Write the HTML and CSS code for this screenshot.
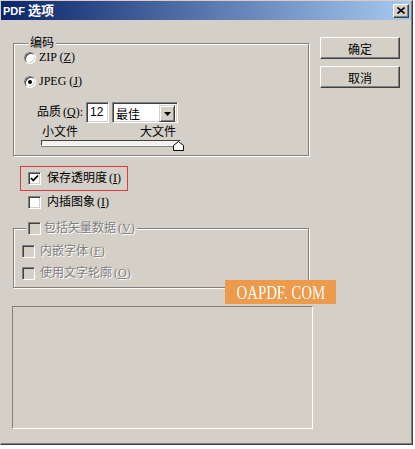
FILE: index.html
```html
<!DOCTYPE html>
<html lang="zh-CN">
<head>
    <meta charset="UTF-8">
    <meta name="viewport" content="width=device-width, initial-scale=1.0">
    <title>PDF 选项</title>
    <link rel="stylesheet" href="styles.css">
</head>
<body>
    <div class="dialog">
        <div class="titlebar">
            <span class="title"><span class="title-latin">PDF</span> 选项</span>
            <button class="close-btn">
                <svg width="8" height="7" viewBox="0 0 8 7"><path d="M0.5 0.5 L7.5 6.5 M7.5 0.5 L0.5 6.5" stroke="#000" stroke-width="1.6"/></svg>
            </button>
        </div>

        <div class="dialog-body">
            <div class="left-col">
                <div class="group group-encoding">
                    <span class="group-label">编码</span>
                    <div class="radio-row"><span class="radio"></span><span>ZIP (<u>Z</u>)</span></div>
                    <div class="radio-row radio-row-jpeg"><span class="radio checked"></span><span>JPEG (<u>J</u>)</span></div>
                    <div class="quality-row">
                        <span>品质<span class="key">(<u>Q</u>):</span></span>
                        <span class="text-field">12</span>
                        <span class="select-box">
                            <span class="select-value">最佳</span>
                            <span class="select-arrow">
                                <svg width="7" height="4" viewBox="0 0 7 4"><path d="M0 0 H7 L3.5 4 Z" fill="#000"/></svg>
                            </span>
                        </span>
                    </div>
                    <div class="size-labels"><span>小文件</span><span>大文件</span></div>
                    <div class="slider">
                        <svg class="slider-thumb" width="11" height="10" viewBox="0 0 11 10">
                            <path d="M0.5 9.5 V4.5 L5.5 0.5 L10.5 4.5 V9.5 Z" fill="#fff" stroke="#000"/>
                        </svg>
                    </div>
                </div>

                <div class="check-row highlight">
                    <span class="checkbox">
                        <svg width="11" height="11" viewBox="0 0 11 11"><path d="M2 5 L4.3 7.5 L9 2.5" fill="none" stroke="#000" stroke-width="1.8"/></svg>
                    </span>
                    <span>保存透明度<span class="key">(<u>I</u>)</span></span>
                </div>
                <div class="check-row">
                    <span class="checkbox"></span>
                    <span>内插图象<span class="key">(<u>I</u>)</span></span>
                </div>

                <div class="group group-vector">
                    <span class="group-label">
                        <span class="checkbox disabled"></span>
                        <span class="disabled-text">包括矢量数据<span class="key">(<u>V</u>)</span></span>
                    </span>
                    <div class="sub-row"><span class="checkbox disabled"></span><span class="disabled-text">内嵌字体<span class="key">(<u>F</u>)</span></span></div>
                    <div class="sub-row"><span class="checkbox disabled"></span><span class="disabled-text">使用文字轮廓<span class="key">(<u>O</u>)</span></span></div>
                </div>

                <div class="preview-panel"></div>
            </div>

            <div class="right-col">
                <button class="btn">确定</button>
                <button class="btn">取消</button>
            </div>
        </div>

        <div class="watermark"><span>OAPDF. COM</span></div>
    </div>
</body>
</html>
```

FILE: styles.css
```css
:root {
    --face: #d4d0c8;
    --shadow: #808080;
    --dark: #404040;
    --light: #ffffff;
}

* {
    margin: 0;
    padding: 0;
    box-sizing: border-box;
}

body {
    background: #ffffff;
    font-family: 'Liberation Serif', 'Noto Sans CJK SC', sans-serif;
    font-size: 12px;
    line-height: 13px;
    color: #000;
}

u {
    text-decoration: underline;
    text-underline-offset: 1px;
}

.key {
    margin-left: 2px;
}

.dialog {
    position: relative;
    width: 413px;
    height: 445px;
    background: var(--face);
    border: 1px solid;
    border-color: var(--face) var(--dark) var(--dark) var(--face);
    box-shadow: inset -1px -1px 0 var(--shadow);
}

.titlebar {
    height: 19px;
    margin-right: 1px;
    display: flex;
    align-items: center;
    justify-content: space-between;
    background: linear-gradient(90deg, #0a246a, #a6caf0);
}

.title {
    padding-left: 2px;
    color: #fff;
    font-family: 'Noto Sans CJK SC', sans-serif;
    font-weight: bold;
    font-size: 13px;
}

.title-latin {
    font-family: 'Liberation Sans', sans-serif;
    font-size: 11px;
}

.close-btn {
    width: 16px;
    height: 14px;
    margin-right: 2px;
    display: flex;
    align-items: center;
    justify-content: center;
    background: var(--face);
    border: 1px solid;
    border-color: var(--light) var(--dark) var(--dark) var(--light);
    box-shadow: inset -1px -1px 0 var(--shadow);
}

.dialog-body {
    display: flex;
    gap: 11px;
    padding-left: 12px;
}

.left-col {
    width: 296px;
    padding-top: 23px;
    display: flex;
    flex-direction: column;
}

.right-col {
    padding-top: 17px;
    display: flex;
    flex-direction: column;
    gap: 7px;
}

.btn {
    width: 80px;
    height: 22px;
    background: var(--face);
    border: 1px solid;
    border-color: var(--light) var(--dark) var(--dark) var(--light);
    box-shadow: inset -1px -1px 0 var(--shadow);
    font-family: 'Noto Sans CJK SC', sans-serif;
    font-size: 12px;
    color: #000;
}

/* group boxes */
.group {
    position: relative;
    border: 1px solid var(--shadow);
    box-shadow: inset 1px 1px 0 var(--light), 1px 1px 0 var(--light);
}

.group-label {
    position: absolute;
    top: -7px;
    left: 14px;
    padding: 0 2px;
    background: var(--face);
    display: flex;
    align-items: center;
    gap: 5px;
    height: 13px;
}

.group-encoding {
    height: 113px;
    padding-top: 7px;
}

.radio-row {
    display: flex;
    align-items: center;
    gap: 3px;
    height: 13px;
    padding-left: 10px;
}

.radio-row-jpeg {
    margin-top: 11px;
}

.radio {
    position: relative;
    width: 12px;
    height: 12px;
    border-radius: 50%;
    background: #fff;
    border: 1px solid;
    border-color: var(--shadow) var(--light) var(--light) var(--shadow);
    box-shadow: inset 1px 1px 0 var(--dark), inset -1px -1px 0 var(--face);
}

.radio.checked::after {
    content: '';
    position: absolute;
    left: 3px;
    top: 3px;
    width: 4px;
    height: 4px;
    border-radius: 50%;
    background: #000;
}

.quality-row {
    margin-top: 14px;
    padding-left: 23px;
    height: 21px;
    display: flex;
    align-items: center;
}

.text-field {
    width: 23px;
    height: 21px;
    margin-left: 3px;
    padding-left: 3px;
    background: #fff;
    border: 1px solid;
    border-color: var(--shadow) var(--light) var(--light) var(--shadow);
    box-shadow: inset 1px 1px 0 var(--dark), inset -1px -1px 0 var(--face);
    font-family: 'Liberation Sans', sans-serif;
    line-height: 19px;
}

.select-box {
    width: 66px;
    height: 21px;
    margin-left: 3px;
    padding: 2px;
    display: flex;
    justify-content: space-between;
    background: #fff;
    border: 1px solid;
    border-color: var(--shadow) var(--light) var(--light) var(--shadow);
    box-shadow: inset 1px 1px 0 var(--dark), inset -1px -1px 0 var(--face);
}

.select-value {
    padding-left: 1px;
    font-family: 'Noto Sans CJK SC', sans-serif;
    line-height: 17px;
}

.select-arrow {
    width: 16px;
    height: 17px;
    display: flex;
    align-items: center;
    justify-content: center;
    background: var(--face);
    border: 1px solid;
    border-color: var(--face) var(--dark) var(--dark) var(--face);
    box-shadow: inset 1px 1px 0 var(--light), inset -1px -1px 0 var(--shadow);
}

.size-labels {
    margin-top: 3px;
    margin-left: 28px;
    width: 134px;
    display: flex;
    justify-content: space-between;
    line-height: 12px;
}

.slider {
    position: relative;
    margin-top: 2px;
    margin-left: 27px;
    width: 140px;
    height: 6px;
    background: #f2f1ee;
    border: 1px solid;
    border-color: var(--dark) var(--light) var(--light) var(--dark);
    box-shadow: 0 1px 0 var(--shadow);
}

.slider-thumb {
    position: absolute;
    right: -4px;
    top: 0;
}

/* checkboxes */
.checkbox {
    width: 13px;
    height: 13px;
    flex: none;
    display: flex;
    align-items: center;
    justify-content: center;
    background: #fff;
    border: 1px solid;
    border-color: var(--shadow) var(--light) var(--light) var(--shadow);
    box-shadow: inset 1px 1px 0 var(--dark), inset -1px -1px 0 var(--face);
}

.checkbox.disabled {
    background: var(--face);
}

.check-row {
    display: flex;
    align-items: center;
    gap: 6px;
    height: 13px;
    margin-top: 5px;
    margin-left: 15px;
}

.check-row.highlight {
    width: 108px;
    height: 25px;
    margin-top: 10px;
    margin-left: 7px;
    padding-left: 7px;
    border: 1px solid #dc3a3e;
}

.disabled-text {
    color: var(--shadow);
    text-shadow: 1px 1px 0 var(--light);
}

.group-vector {
    margin-top: 19px;
    height: 60px;
    padding-top: 16px;
    padding-left: 8px;
    display: flex;
    flex-direction: column;
    gap: 9px;
}

.group-vector .group-label {
    left: 12px;
    gap: 3px;
}

.sub-row {
    display: flex;
    align-items: center;
    gap: 5px;
    height: 13px;
}

.preview-panel {
    margin-top: 18px;
    margin-left: -1px;
    width: 301px;
    height: 123px;
    border: 1px solid;
    border-color: var(--shadow) var(--light) var(--light) var(--shadow);
}

.watermark {
    position: absolute;
    left: 224px;
    top: 279px;
    width: 111px;
    height: 24px;
    display: flex;
    align-items: center;
    justify-content: center;
    background: #ec9a4b;
    color: #fff;
    font-family: 'Liberation Serif', serif;
    font-size: 19px;
}

.watermark span {
    display: inline-block;
    transform: scaleX(0.78);
    white-space: nowrap;
}
```
